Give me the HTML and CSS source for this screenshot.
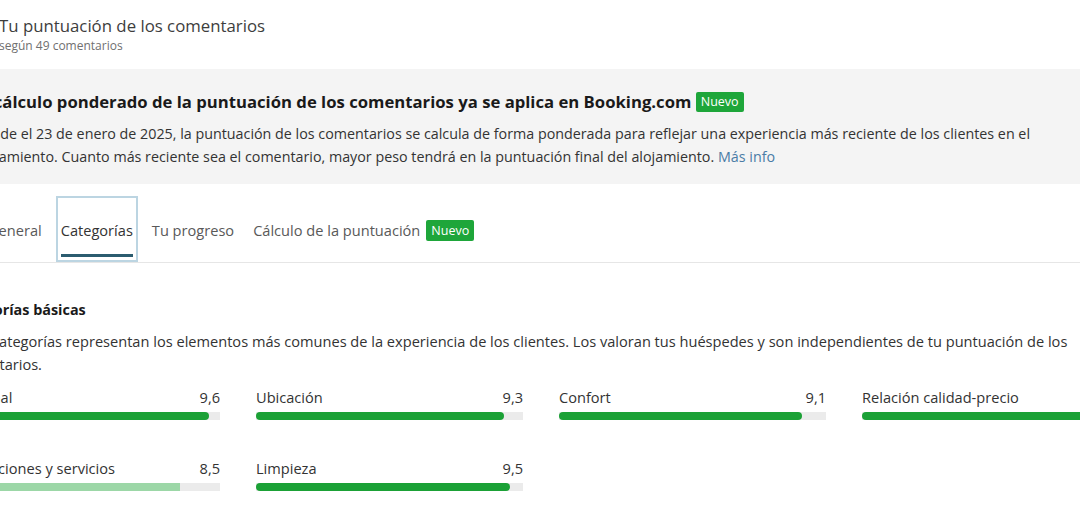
FILE: index.html
```html
<!DOCTYPE html>
<html lang="es">
<head>
    <meta charset="UTF-8">
    <meta name="viewport" content="width=device-width, initial-scale=1.0">
    <title>Tu puntuación de los comentarios</title>
    <link rel="stylesheet" href="styles.css">
</head>
<body>
    <div class="page">
        <header class="score-head">
            <h1>Tu puntuación de los comentarios</h1>
            <p class="score-sub">según 49 comentarios</p>
        </header>

        <section class="notice">
            <h2>El cálculo ponderado de la puntuación de los comentarios ya se aplica en Booking.com <span class="badge">Nuevo</span></h2>
            <p>Desde el 23 de enero de 2025, la puntuación de los comentarios se calcula de forma ponderada para reflejar una experiencia más reciente de los clientes en el<br>alojamiento. Cuanto más reciente sea el comentario, mayor peso tendrá en la puntuación final del alojamiento. <a href="#">Más info</a></p>
        </section>

        <nav class="tabs">
            <a class="tab" href="#"><span class="tab-label">General</span></a>
            <a class="tab active focused" href="#"><span class="tab-label">Categorías</span></a>
            <a class="tab" href="#"><span class="tab-label">Tu progreso</span></a>
            <a class="tab" href="#"><span class="tab-label">Cálculo de la puntuación <span class="badge">Nuevo</span></span></a>
        </nav>

        <section class="cats">
            <h3>Categorías básicas</h3>
            <p>Estas categorías representan los elementos más comunes de la experiencia de los clientes. Los valoran tus huéspedes y son independientes de tu puntuación de los<br>comentarios.</p>

            <div class="cat-grid">
                <div class="cat">
                    <div class="cat-top"><span>Personal</span><span>9,6</span></div>
                    <div class="track"><div class="fill" style="width: 96%"></div></div>
                </div>
                <div class="cat">
                    <div class="cat-top"><span>Ubicación</span><span>9,3</span></div>
                    <div class="track"><div class="fill" style="width: 93%"></div></div>
                </div>
                <div class="cat">
                    <div class="cat-top"><span>Confort</span><span>9,1</span></div>
                    <div class="track"><div class="fill" style="width: 91%"></div></div>
                </div>
                <div class="cat">
                    <div class="cat-top"><span>Relación calidad-precio</span><span>9,4</span></div>
                    <div class="track"><div class="fill" style="width: 94%"></div></div>
                </div>
                <div class="cat">
                    <div class="cat-top"><span>Instalaciones y servicios</span><span>8,5</span></div>
                    <div class="track"><div class="fill low" style="width: 85%"></div></div>
                </div>
                <div class="cat">
                    <div class="cat-top"><span>Limpieza</span><span>9,5</span></div>
                    <div class="track"><div class="fill" style="width: 95%"></div></div>
                </div>
            </div>
        </section>
    </div>
</body>
</html>
```

FILE: styles.css
```css
body {
    margin: 0;
    overflow: hidden;
    background-color: #fff;
    color: #333;
    font-family: "Open Sans", "Noto Sans", sans-serif;
}

.page {
    width: 1240px;
    margin-left: -47px; /* the shot is cut on the left */
}

/* header */
.score-head {
    padding-left: 46px;
}
.score-head h1 {
    margin: 14px 0 0;
    font-size: 16.8px;
    font-weight: normal;
    line-height: 24px;
    color: #3d3d3d;
}
.score-sub {
    margin: 0;
    font-size: 12px;
    line-height: 16px;
    color: #707070;
}

/* grey notice */
.notice {
    margin-top: 15px;
    padding: 21px 22px 16px;
    background-color: #f4f4f4;
}
.notice h2 {
    margin: 0;
    font-size: 16.7px;
    line-height: 24px;
    font-weight: bold;
    color: #1a1a1a;
}
.notice p {
    margin: 8px 0 0;
    font-size: 14.3px;
    line-height: 23px;
    color: #333;
}
.notice a {
    color: #4a7ca6;
    text-decoration: none;
}

.badge {
    display: inline-block;
    padding: 0 5px;
    border-radius: 2px;
    background-color: #1ea63a;
    color: #fff;
    font-size: 12.5px;
    font-weight: normal;
    line-height: 20px;
    vertical-align: 2px;
}

/* tabs */
.tabs {
    display: flex;
    gap: 9px;
    margin-top: 12px;
    padding-left: 30px;
    border-bottom: 1px solid #e6e6e6;
}
.tab {
    padding: 0 3px 3px;
    border: 2px solid transparent;
    color: #595959;
    text-decoration: none;
    font-size: 14.6px;
}
.tab.focused {
    border-color: #bcd5e2;
}
.tab-label {
    display: flex;
    align-items: center;
    gap: 6px;
    box-sizing: border-box;
    height: 59px;
    padding-top: 8px;
    border-bottom: 3px solid transparent;
}
.tab.active .tab-label {
    color: #333;
    border-bottom-color: #2b5c6f;
}
.tab .badge {
    line-height: 21px;
    vertical-align: 0;
}

/* categories */
.cats h3 {
    margin: 36px 0 0;
    font-size: 14.4px;
    line-height: 22px;
    font-weight: bold;
    color: #1a1a1a;
}
.cats p {
    margin: 9px 0 0;
    font-size: 14.6px;
    line-height: 23px;
}
.cat-grid {
    display: grid;
    grid-template-columns: repeat(4, 267px);
    column-gap: 36px;
    row-gap: 37px;
    margin-top: 10px;
}
.cat-top {
    display: flex;
    justify-content: space-between;
    font-size: 14.6px;
    line-height: 22px;
}
.track {
    height: 8px;
    margin-top: 4px;
    background-color: #ebebeb;
}
.fill {
    height: 100%;
    border-radius: 4px;
    background-color: #1ba136;
}
.fill.low {
    background-color: #9cd7a7;
    border-radius: 0;
}
```
